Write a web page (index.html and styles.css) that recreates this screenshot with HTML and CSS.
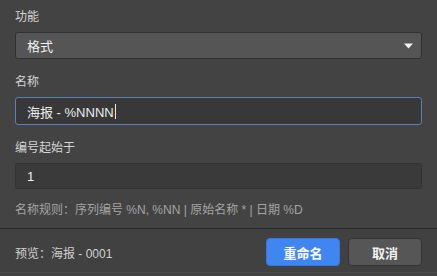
FILE: index.html
```html
<!DOCTYPE html>
<html lang="zh-CN">
  <head>
    <meta charset="UTF-8" />
    <title>批量重命名</title>
    <link rel="stylesheet" href="styles.css">
  </head>
  <body>
    <div class="dialog">
      <div class="form">
        <div class="field">
          <div class="label">功能</div>
          <div class="select">
            <span>格式</span>
            <svg class="arrow" width="9" height="6" viewBox="0 0 9 6"><path d="M0 0.5 L9 0.5 L4.5 5.5 Z" fill="#f2f2f2"/></svg>
          </div>
        </div>
        <div class="field">
          <div class="label">名称</div>
          <div class="input focus">海报 - %NNNN<span class="caret"></span></div>
        </div>
        <div class="field">
          <div class="label">编号起始于</div>
          <div class="input start">1</div>
        </div>
        <div class="hint">名称规则：序列编号 %N, %NN | 原始名称 * | 日期 %D</div>
      </div>
      <div class="footer">
        <div class="preview">预览：海报 - 0001</div>
        <button class="btn primary">重命名</button>
        <button class="btn">取消</button>
      </div>
    </div>
  </body>
</html>
```

FILE: styles.css
```css
body {
    margin: 0;
    background: #434343;
    font-family: "Liberation Sans", "Noto Sans CJK SC", sans-serif;
    color: #e6e6e6;
}

.dialog {
    height: 276px;
    display: flex;
    flex-direction: column;
}

.form {
    padding: 7px 15px 0 15px;
}

.field {
    margin-bottom: 13px;
}

.label {
    font-size: 12px;
    line-height: 18px;
    color: #d6d6d6;
    margin-bottom: 7px;
    padding-top: 1px;
    height: 17px;
}

.select {
    height: 25px;
    border: 1px solid #313131;
    border-radius: 3px;
    background: #555555;
    display: flex;
    align-items: center;
    justify-content: space-between;
    padding: 0 8px 0 11px;
    font-size: 13px;
    color: #f0f0f0;
}

.arrow {
    display: block;
}

.input {
    height: 26px;
    border: 1px solid #323232;
    border-radius: 3px;
    background: #3a3a3a;
    display: flex;
    align-items: center;
    padding: 0 11px;
    font-size: 13px;
    color: #ececec;
}

.input.start {
    height: 24px;
}

.input.focus {
    background: #383838;
    border-color: #5b7fb8;
}

.caret {
    display: inline-block;
    width: 1px;
    height: 15px;
    background: #e8e8e8;
    margin-left: 1px;
}

.hint {
    font-size: 12px;
    line-height: 16px;
    color: #a4a4a4;
    margin-top: 1px;
}

.footer {
    margin-top: 10px;
    border-top: 1px solid #2e2e2e;
    border-bottom: 1px solid #4d4d4d;
    background: #414141;
    display: flex;
    align-items: center;
    gap: 8px;
    padding: 9px 15px 6px 15px;
}

.preview {
    flex: 1;
    font-size: 12px;
    color: #d0d0d0;
}

.btn {
    width: 74px;
    height: 28px;
    border: 1px solid #343434;
    border-radius: 4px;
    background: #565656;
    color: #f2f2f2;
    font-family: inherit;
    font-size: 13px;
    font-weight: bold;
    padding: 0;
}

.btn.primary {
    background: #3f86f2;
    border-color: #3a78d8;
    color: #ffffff;
}
```
